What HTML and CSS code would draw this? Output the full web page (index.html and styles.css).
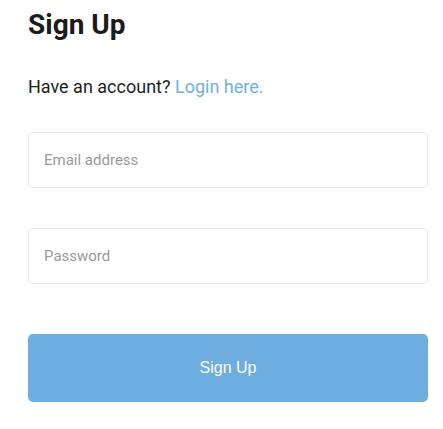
FILE: index.html
```html
<!DOCTYPE html>
<html lang="en">
<head>
<meta charset="utf-8">
<title>Sign Up</title>
<link rel="stylesheet" href="styles.css">
</head>
<body>
<main class="signup">
  <h1 class="title">Sign Up</h1>
  <p class="subtitle">Have an account? <a class="login-link" href="#">Login here.</a></p>
  <form class="form">
    <input class="field" type="email" placeholder="Email address">
    <input class="field" type="password" placeholder="Password">
    <button class="submit" type="button">Sign Up</button>
  </form>
</main>
</body>
</html>
```

FILE: styles.css
```css
html, body {
  margin: 0;
  padding: 0;
  background: #ffffff;
}

.signup {
  padding: 8px 15px 0 28px;
  font-family: Roboto, "Liberation Sans", sans-serif;
  color: #1e1e1e;
}

.title {
  margin: 0;
  font-size: 28px;
  line-height: 34px;
  font-weight: 700;
  color: #1b1b1b;
}

.subtitle {
  margin: 33px 0 0;
  font-size: 18px;
  line-height: 24px;
  color: #1e1e1e;
}

.login-link {
  color: #6fb0e2;
  text-decoration: none;
}

.form {
  display: flex;
  flex-direction: column;
  margin-top: 33px;
}

.field {
  box-sizing: border-box;
  width: 100%;
  height: 56px;
  margin: 0 0 40px;
  padding: 0 15px;
  border: 1px solid #ebe5e7;
  border-radius: 4px;
  font-family: Roboto, "Liberation Sans", sans-serif;
  font-size: 15px;
  color: #333;
  background: #fff;
  outline: none;
}

.field::placeholder {
  color: #9b9b9b;
}

.form .field:last-of-type {
  margin-bottom: 50px;
}

.submit {
  box-sizing: border-box;
  width: 100%;
  height: 68px;
  border: none;
  border-radius: 5px;
  background: #6eaddf;
  color: #ffffff;
  font-family: "Liberation Sans", Arial, sans-serif;
  font-size: 16px;
  cursor: pointer;
}
```
